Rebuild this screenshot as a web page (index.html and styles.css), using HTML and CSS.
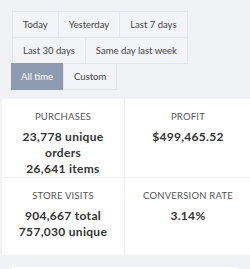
FILE: index.html
```html
<!DOCTYPE html>
<html>
<head>
<meta charset="utf-8">
<link rel="stylesheet" href="styles.css">
</head>
<body>
<div class="filters">
  <button class="btn">Today</button>
  <button class="btn">Yesterday</button>
  <button class="btn">Last 7 days</button>
  <button class="btn">Last 30 days</button>
  <button class="btn">Same day last week</button>
  <button class="btn active">All time</button>
  <button class="btn">Custom</button>
</div>
<div class="stats">
  <div class="cell">
    <div class="label">PURCHASES</div>
    <div class="value">23,778 unique orders<br>26,641 items</div>
  </div>
  <div class="cell">
    <div class="label">PROFIT</div>
    <div class="value">$499,465.52</div>
  </div>
  <div class="cell">
    <div class="label">STORE VISITS</div>
    <div class="value">904,667 total<br>757,030 unique</div>
  </div>
  <div class="cell">
    <div class="label">CONVERSION RATE</div>
    <div class="value">3.14%</div>
  </div>
</div>
<div class="next"></div>
</body>
</html>
```
FILE: styles.css
```css
html, body {
  margin: 0;
  padding: 0;
  background: #f1f2f6;
  font-family: "Lato", "Open Sans", sans-serif;
  overflow: hidden;
}
.filters {
  display: flex;
  flex-wrap: wrap;
  width: 200px;
  padding: 11px 0 0 12px;
}
.btn {
  font-family: inherit;
  font-size: 9.5px;
  color: #444;
  background: #f3f4f7;
  border: 1px solid #e3e5ea;
  height: 27px;
  padding: 0 10px;
  margin: 0 -1px -1px 0;
  cursor: pointer;
}
.btn.active {
  background: #8e9ab0;
  border-color: #8e9ab0;
  color: #fff;
  margin-left: -1px;
  margin-right: 0;
  padding: 0 9px;
}
.stats {
  display: grid;
  grid-template-columns: 122px 126px;
  grid-template-rows: 78px 77px;
  gap: 1px;
  margin: 10px 0 0 2px;
}
.cell {
  background: #fff;
  text-align: center;
  padding: 12px 6px 0;
}
.label {
  font-size: 9.5px;
  line-height: 12px;
  color: #555;
  letter-spacing: 0.2px;
}
.value {
  margin-top: 6px;
  font-size: 12px;
  line-height: 16px;
  font-weight: 700;
  color: #333;
  letter-spacing: 0.3px;
}
.next {
  margin: 12px 13px 0 12px;
  height: 2px;
  background: #fff;
}
```
